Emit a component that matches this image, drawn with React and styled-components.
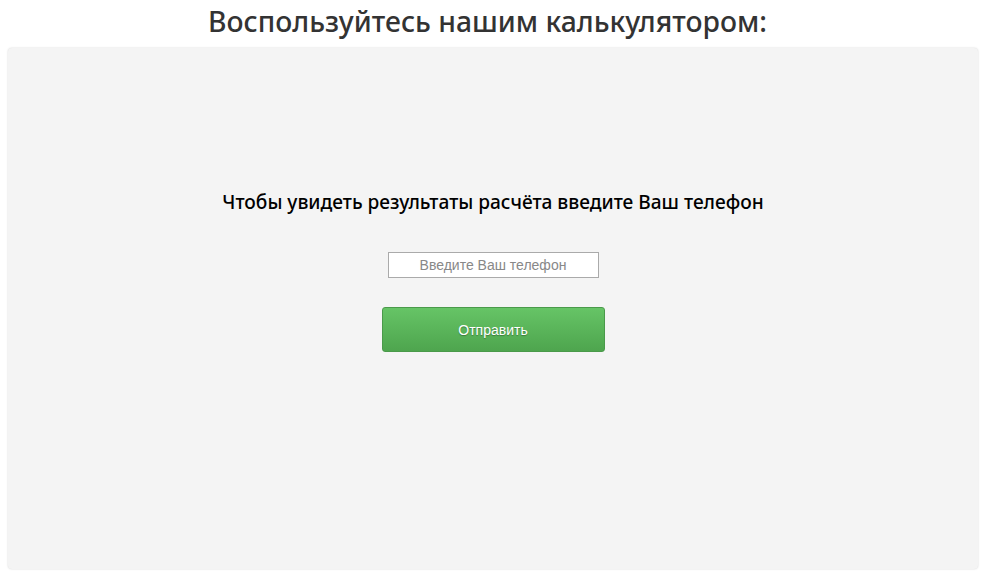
import styled, { createGlobalStyle } from 'styled-components'

const GlobalStyle = createGlobalStyle`
    html, body {
        margin: 0;
        padding: 0;
        background: #ffffff;
    }
`

function App() {
    return (
        <Page>
            <GlobalStyle />
            <Title>Воспользуйтесь нашим калькулятором:</Title>
            <Panel>
                <Prompt>Чтобы увидеть результаты расчёта введите Ваш телефон</Prompt>
                <Form onSubmit={e => e.preventDefault()}>
                    <PhoneInput type="tel" placeholder="Введите Ваш телефон" />
                    <SubmitButton type="submit">Отправить</SubmitButton>
                </Form>
            </Panel>
        </Page>
    )
}

export default App

const Page = styled.div`
    padding: 0 10px 9px 8px;
    font-family: "Noto Sans", sans-serif;
`

const Title = styled.h2`
    margin: 0;
    padding-right: 11px;
    height: 48px;
    line-height: 42px;
    text-align: center;
    font-size: 28.3px;
    font-weight: 500;
    color: #333333;
`

const Panel = styled.div`
    height: 521px;
    box-sizing: border-box;
    background: #f4f4f4;
    border-radius: 4px;
    box-shadow: 0 0 2px rgba(0, 0, 0, 0.18);
    padding-top: 140px;
    display: flex;
    flex-direction: column;
    align-items: center;
`

const Prompt = styled.p`
    margin: 0;
    font-size: 19.1px;
    font-weight: 500;
    line-height: 28px;
    color: #000000;
`

const Form = styled.form`
    margin-top: 36px;
    display: flex;
    flex-direction: column;
    align-items: center;
    gap: 29px;
`

const PhoneInput = styled.input`
    width: 211px;
    height: 26px;
    box-sizing: border-box;
    border: 1px solid #aaaaaa;
    background: #ffffff;
    text-align: center;
    font-family: "Liberation Sans", Arial, sans-serif;
    font-size: 14px;
    color: #333;
    outline: none;

    &::placeholder {
        color: #888888;
    }
`

const SubmitButton = styled.button`
    width: 223px;
    height: 45px;
    border: 1px solid #4a9a4a;
    border-radius: 3px;
    background: linear-gradient(to bottom, #66c466, #4ea54e);
    color: #ffffff;
    font-family: "Liberation Sans", Arial, sans-serif;
    font-size: 14px;
    text-shadow: 0 1px 1px rgba(0, 0, 0, 0.3);
    cursor: pointer;
`
